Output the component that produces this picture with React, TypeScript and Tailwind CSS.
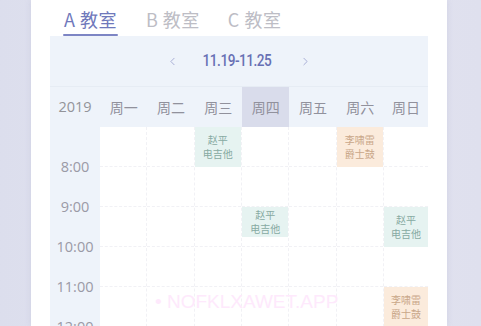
import { ChevronLeft, ChevronRight } from "lucide-react";

type Lesson = { name: string; course: string; tone: "green" | "peach"; h: string };

const days = ["周一", "周二", "周三", "周四", "周五", "周六", "周日"];
const times = ["8:00", "9:00", "10:00", "11:00", "12:00"];

// slot index -> lesson, per day column
const schedule: Record<number, Record<number, Lesson>> = {
  2: { 0: { name: "赵平", course: "电吉他", tone: "green", h: "h-[40px]" } },
  3: { 2: { name: "赵平", course: "电吉他", tone: "green", h: "h-[30px]" } },
  5: { 0: { name: "李啸雷", course: "爵士鼓", tone: "peach", h: "h-[40px]" } },
  6: {
    2: { name: "赵平", course: "电吉他", tone: "green", h: "h-[40px]" },
    4: { name: "李啸雷", course: "爵士鼓", tone: "peach", h: "h-[40px]" },
  },
};

const font = "font-['Noto_Sans_CJK_SC',sans-serif]";

function LessonCard({ lesson }: { lesson: Lesson }) {
  const tone =
    lesson.tone === "green"
      ? "bg-[#e6f3f1] text-[#86aaa2]"
      : "bg-[#fbebdc] text-[#c9a789]";
  return (
    <div
      className={`${lesson.h} ${tone} flex flex-col items-center justify-center text-[10px] leading-[14px]`}
    >
      <span>{lesson.name}</span>
      <span>{lesson.course}</span>
    </div>
  );
}

export default function App() {
  return (
    <div
      className={`w-[481px] h-[326px] overflow-hidden bg-gradient-to-r from-[#dcdeed] via-[#e4e5f0] to-[#dfe0ee] pl-[31px] ${font}`}
    >
      <div className="relative w-[416px] h-[326px] bg-white shadow-[0_0_6px_rgba(140,140,180,0.18)] pl-[19px]">
        {/* Tabs */}
        <div className="h-[36px] flex items-end pl-[13px] gap-[28px]">
          <div className="flex flex-col items-center">
            <span className="text-[18px] leading-[24px] text-[#6f78bb] tracking-[0.5px]">A 教室</span>
            <span className="mt-[3px] h-[2px] w-[55px] bg-[#7d85c4] rounded-full" />
          </div>
          <span className="text-[18px] leading-[24px] text-[#bdbdc5] tracking-[0.5px] mb-[5px]">B 教室</span>
          <span className="text-[18px] leading-[24px] text-[#bdbdc5] tracking-[0.5px] mb-[5px]">C 教室</span>
        </div>

        <div className="w-[378px]">
          {/* Week switcher */}
          <div className="h-[51px] bg-[#eef3fa] flex items-center justify-center border-b border-[#e6ecf4]">
            <ChevronLeft className="w-[13px] h-[13px] text-[#9ea4cf] mr-[15px]" strokeWidth={1.6} />
            <span className="font-['Roboto',sans-serif] text-[17px] font-medium tracking-[-0.6px] text-[#6770b4] [transform:scaleX(0.8)]">
              11.19-11.25
            </span>
            <ChevronRight className="w-[13px] h-[13px] text-[#9ea4cf] ml-[20px]" strokeWidth={1.6} />
          </div>

          {/* Header row */}
          <div className="h-[40px] grid grid-cols-[50px_repeat(6,47.33px)_1fr] bg-[#eef3fa] text-[14px] text-[#91919c]">
            <div className="flex items-center justify-center font-['Open_Sans',sans-serif] text-[14.5px] text-[#939399]">2019</div>
            {days.map((d, i) => (
              <div
                key={d}
                className={`flex items-center justify-center ${i === 3 ? "bg-[#d9dceb]" : ""}`}
              >
                {d}
              </div>
            ))}
          </div>

          {/* Body */}
          <div className="grid grid-cols-[50px_repeat(6,47.33px)_1fr]">
            <div className="bg-[#eef3fa] pt-[20px] font-['Open_Sans',sans-serif] text-[14.5px] text-[#9a9aa6]">
              {times.map((t) => (
                <div key={t} className="h-[40px] flex items-center justify-center">
                  {t}
                </div>
              ))}
            </div>
            {days.map((d, i) => (
              <div
                key={d}
                className={`flex flex-col ${i < 6 ? "border-r border-dashed border-[#f1f1f5]" : ""}`}
              >
                {times.map((t, s) => {
                  const lesson = schedule[i]?.[s];
                  return (
                    <div key={t} className="h-[40px] border-b border-dashed border-[#f1f1f5]">
                      {lesson && <LessonCard lesson={lesson} />}
                    </div>
                  );
                })}
              </div>
            ))}
          </div>
        </div>

        {/* watermark */}
        <div className="absolute left-[124px] top-[288px] font-['Liberation_Sans',sans-serif] text-[19px] text-[#fee9fc] pointer-events-none">
          • NOFKLXAWET.APP
        </div>
      </div>
    </div>
  );
}
